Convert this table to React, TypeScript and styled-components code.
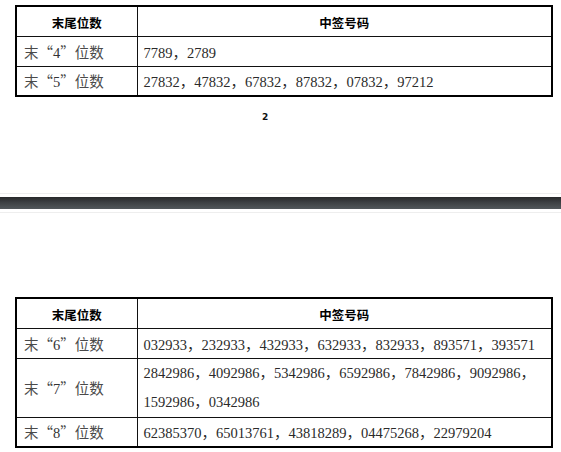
import React from "react";
import styled, { createGlobalStyle } from "styled-components";

const Global = createGlobalStyle`
  html, body { margin: 0; padding: 0; background: #fff; }
  body { font-family: "Liberation Serif", "Noto Sans CJK SC", serif; }
`;

const Page = styled.div`
  width: 561px;
  height: 452px;
  overflow: hidden;
  display: flex;
  flex-direction: column;
`;

const Section = styled.section<{ $top: number }>`
  padding: ${(p) => p.$top}px 0 0 15px;
`;

const Table = styled.table`
  border-collapse: collapse;
  table-layout: fixed;
  width: 538px;
  border: 2px solid #000;
`;

const Row = styled.tr<{ $h: number }>`
  height: ${(p) => p.$h}px;
`;

const HeadCell = styled.th`
  border: 1px solid #111;
  font-family: "Noto Sans CJK SC", sans-serif;
  font-weight: 700;
  font-size: 12.5px;
  color: #000;
  text-align: center;
  vertical-align: middle;
  padding: 3px 0 0;
`;

const LabelCell = styled.td`
  border: 1px solid #111;
  font-size: 14.5px;
  color: #4a4a4a;
  padding: 0 0 0 7px;
  vertical-align: middle;
  white-space: nowrap;
  font-family: "Noto Sans CJK SC", sans-serif;
  font-weight: 400;
`;

const Digit = styled.span`
  font-family: "Liberation Serif", serif;
  font-weight: 400;
  color: #333;
`;

const NumCell = styled.td<{ $lh?: number }>`
  border: 1px solid #111;
  font-size: 14.5px;
  color: #2a2a2a;
  padding: 0 6px 0 6px;
  vertical-align: middle;
  line-height: ${(p) => (p.$lh ? `${p.$lh}px` : "normal")};
  font-family: "Liberation Serif", "Noto Sans CJK SC", serif;
`;

const PageNumber = styled.div`
  padding: 15px 0 0 262px;
  height: 12px;
  font-family: "DejaVu Sans", sans-serif;
  font-weight: 700;
  font-size: 9px;
  color: #111;
`;

const Divider = styled.div`
  margin-top: 69px;
  border-top: 1px solid #eeeeee;
  padding-top: 3px;
  border-bottom: 1px solid #eeeeee;
  padding-bottom: 3px;
`;

const Bar = styled.div`
  height: 12px;
  background: linear-gradient(to bottom, #27292b 0%, #3d4043 45%, #52575b 100%);
`;

type Item = { digit: string; nums: string; h: number; lh?: number };

const first: Item[] = [
  { digit: "4", nums: "7789，2789", h: 30 },
  { digit: "5", nums: "27832，47832，67832，87832，07832，97212", h: 30 },
];

const second: Item[] = [
  {
    digit: "6",
    nums: "032933，232933，432933，632933，832933，893571，393571",
    h: 30,
  },
  {
    digit: "7",
    nums: "2842986，4092986，5342986，6592986，7842986，9092986，1592986，0342986",
    h: 58,
    lh: 29,
  },
  {
    digit: "8",
    nums: "62385370，65013761，43818289，04475268，22979204",
    h: 30,
  },
];

function ResultTable({ items }: { items: Item[] }) {
  return (
    <Table>
      <colgroup>
        <col style={{ width: 121 }} />
        <col />
      </colgroup>
      <thead>
        <Row $h={30}>
          <HeadCell>末尾位数</HeadCell>
          <HeadCell>中签号码</HeadCell>
        </Row>
      </thead>
      <tbody>
        {items.map((it) => (
          <Row key={it.digit} $h={it.h}>
            <LabelCell>
              末“<Digit>{it.digit}</Digit>”位数
            </LabelCell>
            <NumCell $lh={it.lh}>{it.nums}</NumCell>
          </Row>
        ))}
      </tbody>
    </Table>
  );
}

export default function App() {
  return (
    <>
      <Global />
      <Page>
        <Section $top={5}>
          <ResultTable items={first} />
        </Section>
        <PageNumber>2</PageNumber>
        <Divider>
          <Bar />
        </Divider>
        <Section $top={84}>
          <ResultTable items={second} />
        </Section>
      </Page>
    </>
  );
}
